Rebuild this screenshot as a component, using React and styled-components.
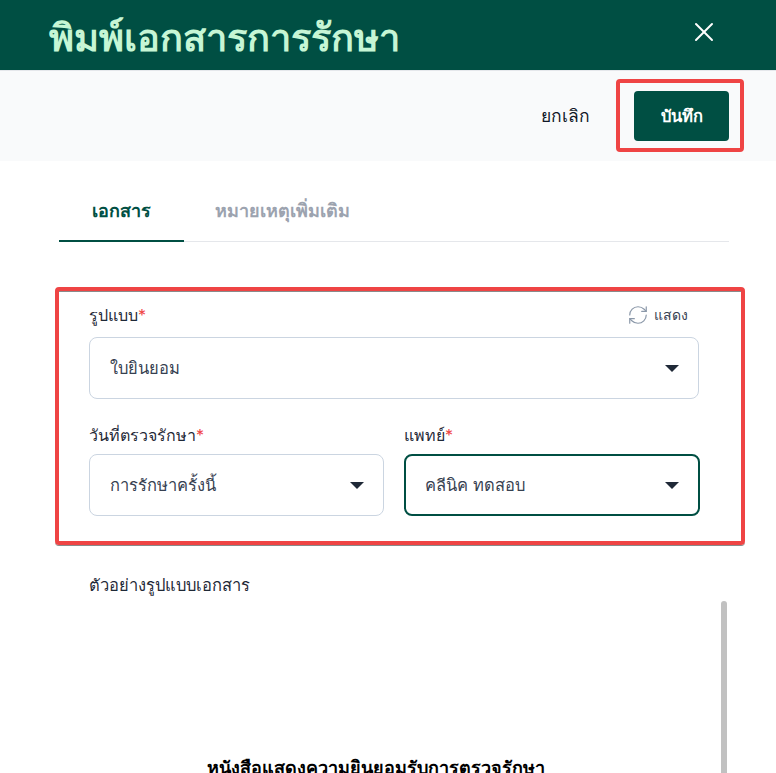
import React from 'react';
import styled, { createGlobalStyle } from 'styled-components';
import { X, RefreshCw } from 'lucide-react';

const GlobalStyle = createGlobalStyle`
  html, body {
    margin: 0;
    height: 100%;
    overflow: hidden;
    background: #fff;
    font-family: Inter, "Noto Sans", sans-serif;
    color: #1f2937;
  }
`;

const Page = styled.div`
  width: 776px;
  height: 773px;
  overflow: hidden;
  background: #fff;
`;

const Header = styled.header`
  height: 71px;
  box-sizing: border-box;
  padding: 4px 56px 0 49px;
  display: flex;
  align-items: center;
  justify-content: space-between;
  background: #004f43;
  border-bottom: 1px solid #e5e7eb;
`;

const Title = styled.h1`
  margin: 0;
  font-size: 38px;
  font-weight: 600;
  color: #c6f6d5;
`;

const CloseButton = styled.div`
  display: flex;
  color: #fff;
  margin-top: -10px;
`;

const Toolbar = styled.div`
  height: 90px;
  box-sizing: border-box;
  padding: 0 32px 0 0;
  display: flex;
  align-items: flex-start;
  justify-content: flex-end;
  gap: 26px;
  background: #f9fafb;
`;

const CancelButton = styled.div`
  margin-top: 31px;
  font-size: 17.5px;
  font-weight: 500;
  color: #111827;
`;

const Highlight = styled.div`
  border: 4px solid #ef4444;
  border-radius: 4px;
  box-sizing: border-box;
`;

const SaveHighlight = styled(Highlight)`
  width: 128px;
  height: 73px;
  margin-top: 8px;
  padding: 8px 11px 7px 14px;
`;

const SaveButton = styled.div`
  height: 50px;
  display: flex;
  align-items: center;
  justify-content: center;
  border-radius: 4px;
  background: #004f43;
  color: #fff;
  font-size: 16.5px;
  font-weight: 600;
`;

const Body = styled.div`
  padding: 29px 47px 0 59px;
`;

const Tabs = styled.div`
  display: flex;
  height: 51px;
  border-bottom: 1px solid #e5e7eb;
`;

const Tab = styled.div`
  width: ${p => p.$width}px;
  box-sizing: border-box;
  margin-bottom: -1px;
  text-align: center;
  line-height: 42px;
  font-size: 18px;
  font-weight: 600;
  color: ${p => (p.$active ? '#004f43' : '#9ca3af')};
  border-bottom: 2px solid ${p => (p.$active ? '#004f43' : 'transparent')};
`;

const FormHighlight = styled(Highlight)`
  width: 690px;
  height: 258px;
  margin: 45px 0 0 -4px;
  padding: 9px 42px 0 30px;
  box-shadow: inset 0 1px 0 #8a8a8a, 0 1px 0 #8a8a8a;
`;

const LabelRow = styled.div`
  display: flex;
  align-items: center;
  justify-content: space-between;
  height: ${p => (p.$compact ? 26 : 30)}px;
  margin-bottom: ${p => (p.$compact ? 6 : 7)}px;
  font-size: 16px;
`;

const Label = styled.label`
  font-size: 16px;
  color: #1f2937;
`;

const Required = styled.span`
  color: #ef4444;
`;

const ShowButton = styled.div`
  display: flex;
  align-items: center;
  gap: 5px;
  font-size: 14px;
  font-weight: 500;
  color: #374151;
  margin-right: 11px;
  svg { color: #8b98a9; }
`;

const Select = styled.div`
  height: 62px;
  box-sizing: border-box;
  padding: 0 19px 0 ${p => (p.$focused ? 19 : 20)}px;
  display: flex;
  align-items: center;
  justify-content: space-between;
  background: #fff;
  border: ${p => (p.$focused ? '2px solid #004f43' : '1px solid #cbd5e1')};
  border-radius: 8px;
  font-size: 16.5px;
  color: #374151;
`;

const Caret = styled.span`
  width: 0;
  height: 0;
  border-left: 7px solid transparent;
  border-right: 7px solid transparent;
  border-top: 7px solid #1f2937;
`;

const Columns = styled.div`
  display: grid;
  grid-template-columns: 295px 296px;
  gap: 20px;
  margin-top: 23px;
`;

const Preview = styled.div`
  position: relative;
  padding: 27px 0 0 30px;
`;

const PreviewLabel = styled.div`
  font-size: 16.5px;
  color: #1f2937;
`;

const PreviewPaper = styled.div`
  margin-top: 155px;
  width: 574px;
  text-align: center;
  font-family: "Liberation Serif", serif;
  font-size: 18px;
  font-weight: 700;
  color: #000;
`;

const ScrollThumb = styled.div`
  position: absolute;
  top: 56px;
  left: 662px;
  width: 6px;
  height: 200px;
  border-radius: 3px;
  background: #c1c1c1;
`;

const App = () => (
  <Page>
    <GlobalStyle />
    <Header>
      <Title>พิมพ์เอกสารการรักษา</Title>
      <CloseButton><X size={32} strokeWidth={1.5} /></CloseButton>
    </Header>
    <Toolbar>
      <CancelButton>ยกเลิก</CancelButton>
      <SaveHighlight><SaveButton>บันทึก</SaveButton></SaveHighlight>
    </Toolbar>
    <Body>
      <Tabs>
        <Tab $active $width={125}>เอกสาร</Tab>
        <Tab $width={197}>หมายเหตุเพิ่มเติม</Tab>
      </Tabs>
      <FormHighlight>
        <LabelRow>
          <Label>รูปแบบ<Required>*</Required></Label>
          <ShowButton><RefreshCw size={22} strokeWidth={1.3} />แสดง</ShowButton>
        </LabelRow>
        <Select>ใบยินยอม<Caret /></Select>
        <Columns>
          <div>
            <LabelRow $compact><Label>วันที่ตรวจรักษา<Required>*</Required></Label></LabelRow>
            <Select>การรักษาครั้งนี้<Caret /></Select>
          </div>
          <div>
            <LabelRow $compact><Label>แพทย์<Required>*</Required></Label></LabelRow>
            <Select $focused>คลีนิค ทดสอบ<Caret /></Select>
          </div>
        </Columns>
      </FormHighlight>
      <Preview>
        <PreviewLabel>ตัวอย่างรูปแบบเอกสาร</PreviewLabel>
        <PreviewPaper>หนังสือแสดงความยินยอมรับการตรวจรักษา</PreviewPaper>
        <ScrollThumb />
      </Preview>
    </Body>
  </Page>
);

export default App;
